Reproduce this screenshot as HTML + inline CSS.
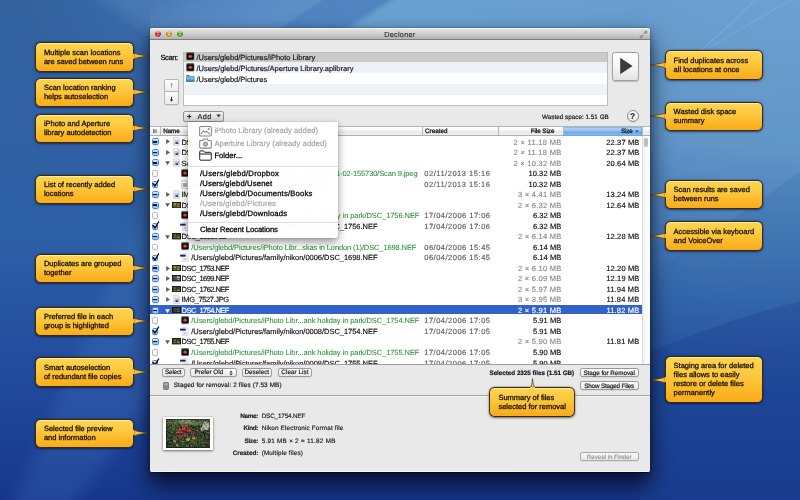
<!DOCTYPE html>
<html>
<head>
<meta charset="utf-8">
<title>Decloner</title>
<style>
html,body{margin:0;padding:0;background:#2a5298;}
body{width:800px;height:500px;overflow:hidden;}
#root{position:relative;width:800px;height:500px;overflow:hidden;font-family:"Liberation Sans",sans-serif;will-change:transform;}
.a{position:absolute;}
.t{position:absolute;white-space:pre;text-rendering:geometricPrecision;-webkit-text-stroke:0.16px currentColor;}
.co{position:absolute;box-sizing:border-box;border:0.7px solid rgba(38,30,8,.92);border-radius:5.6px;
  background:linear-gradient(#fdd554 0%,#fdc83e 42%,#fcb726 75%,#fbab1a 100%);
  box-shadow:0 0.8px 2.2px rgba(0,5,45,.6), inset 0 0.9px 0.5px rgba(255,240,165,.85);}
.btn{position:absolute;box-sizing:border-box;border:0.7px solid #9a9a9a;border-radius:2.2px;
  background:linear-gradient(#ffffff,#f3f3f3 50%,#e6e6e6);box-shadow:0 0.5px 0.5px rgba(0,0,0,.12);}
.cb{position:absolute;box-sizing:border-box;width:6.8px;height:6.8px;border:0.6px solid #b9b9b9;border-radius:1.6px;
  background:linear-gradient(#ffffff,#f1f1f1);box-shadow:0 0.4px 0.5px rgba(0,0,0,.15);}
.cbm{position:absolute;box-sizing:border-box;width:7px;height:7px;border:0.65px solid #4a86dc;border-radius:1.7px;
  background:linear-gradient(#d9e9fb 0%,#a9cdf5 45%,#6faaf0 55%,#a5d3fb 100%);box-shadow:0 0.4px 0.5px rgba(0,0,0,.2);}
</style>
</head>
<body>
<div id="root">
<svg class="a" style="left:0;top:0" width="800" height="500" viewBox="0 0 800 500">
<defs>
<linearGradient id="bg" x1="0" y1="0" x2="0" y2="1">
<stop offset="0" stop-color="#33629f"/><stop offset="0.48" stop-color="#2d5fa6"/><stop offset="0.8" stop-color="#1f479a"/><stop offset="1" stop-color="#17368b"/>
</linearGradient>
<radialGradient id="hl" cx="800" cy="-40" r="1" gradientUnits="userSpaceOnUse" gradientTransform="translate(800 -40) scale(780 420) translate(-800 40)">
<stop offset="0" stop-color="#6ea3d2" stop-opacity="1"/><stop offset="0.45" stop-color="#6a9fcf" stop-opacity=".85"/><stop offset="0.8" stop-color="#5a8fc5" stop-opacity=".3"/><stop offset="1" stop-color="#4a80bc" stop-opacity="0"/>
</radialGradient>
</defs>
<rect width="800" height="500" fill="url(#bg)"/>
<rect width="800" height="500" fill="url(#hl)"/>
<path d="M640 356 Q720 322 800 301 L800 500 L640 500 Z" fill="#1c4490" opacity=".38"/>
<path d="M640 280 Q720 230 800 172 L800 301 Q720 322 640 356 Z" fill="#2c62a6" opacity=".22"/>
<linearGradient id="ts" x1="150" y1="0" x2="660" y2="0" gradientUnits="userSpaceOnUse" gradientTransform="matrix(1 0 -1.54 1 2 0)">
<stop offset="0" stop-color="#4778b4" stop-opacity="1"/><stop offset="0.098" stop-color="#5384bf"/><stop offset="0.294" stop-color="#5d8fc7"/><stop offset="0.332" stop-color="#5c8ec6"/><stop offset="0.339" stop-color="#5083c0"/><stop offset="0.457" stop-color="#5284c1"/><stop offset="0.482" stop-color="#6aa0d0"/><stop offset="0.9" stop-color="#689dce" stop-opacity="1"/><stop offset="1" stop-color="#689dce" stop-opacity="0"/>
</linearGradient>
<linearGradient id="lb" x1="104" y1="12" x2="126" y2="-18" gradientUnits="userSpaceOnUse"><stop offset="0" stop-color="#4a7bb6" stop-opacity="0"/><stop offset="0.5" stop-color="#4a7bb7" stop-opacity=".8"/><stop offset="1" stop-color="#4a7bb7" stop-opacity=".95"/></linearGradient>
<path d="M92 0 L160 0 L160 46 Z" fill="url(#lb)"/>
<filter id="bb" x="-20%" y="-20%" width="140%" height="140%"><feGaussianBlur stdDeviation="7"/></filter>
<path d="M160 170 L160 390 L70 510 L10 510 Z" fill="#5f96dc" opacity=".17" filter="url(#bb)"/>
<path d="M150 0 H660 V30 H150 Z" fill="url(#ts)"/>
<path d="M700 52 Q728 26 756 -1" stroke="#9cc4e6" stroke-opacity=".32" stroke-width="1.1" fill="none"/>
<path d="M710 47 Q750 24 792 -1" stroke="#9cc4e6" stroke-opacity=".28" stroke-width="1.1" fill="none"/>
</svg>
<div class="a" style="left:150px;top:28px;width:500px;height:444px;border-radius:3px 3px 2.5px 2.5px;background:#e9e9e9;box-shadow:0 13px 22px 1px rgba(0,0,12,.66),0 3px 10px rgba(0,0,24,.28),0 0 1.5px rgba(0,0,10,.6),0 0.8px 0.6px rgba(0,0,20,.55),inset 0 -0.8px 0 #fbfbfb;"></div>
<div class="a" style="left:150px;top:28px;width:500px;height:12px;border-radius:3px 3px 0 0;background:linear-gradient(#e6e6e6,#d0d0d0 50%,#b4b4b4);border-bottom:0.7px solid #7e7e7e;box-sizing:border-box;box-shadow:inset 0 0.7px 0 rgba(255,255,255,.85)"></div>
<div class="a" style="left:154.6px;top:30.7px;width:6.6px;height:6.6px;border-radius:50%;box-sizing:border-box;border:0.5px solid #a81d14;background:radial-gradient(circle at 50% 85%,#ff7a70 0%,#d8291d 70%);box-shadow:0 0.5px 0 rgba(255,255,255,.5)"></div>
<div class="a" style="left:156.0px;top:31.3px;width:3.8px;height:2.2px;border-radius:50%;background:rgba(255,255,255,.55)"></div>
<div class="a" style="left:165.7px;top:30.7px;width:6.6px;height:6.6px;border-radius:50%;box-sizing:border-box;border:0.5px solid #a9700d;background:radial-gradient(circle at 50% 85%,#ffd56a 0%,#e59a14 70%);box-shadow:0 0.5px 0 rgba(255,255,255,.5)"></div>
<div class="a" style="left:167.1px;top:31.3px;width:3.8px;height:2.2px;border-radius:50%;background:rgba(255,255,255,.55)"></div>
<div class="a" style="left:176.7px;top:30.7px;width:6.6px;height:6.6px;border-radius:50%;box-sizing:border-box;border:0.5px solid #3a7c18;background:radial-gradient(circle at 50% 85%,#a6e37a 0%,#4faa22 70%);box-shadow:0 0.5px 0 rgba(255,255,255,.5)"></div>
<div class="a" style="left:178.1px;top:31.3px;width:3.8px;height:2.2px;border-radius:50%;background:rgba(255,255,255,.55)"></div>
<span class="t" style="left:384.18px;top:29.00px;font-size:7.3px;line-height:12px;height:12px;color:#333;letter-spacing:0.261px;">Decloner</span>
<svg class="a" style="left:639px;top:30px" width="9" height="9" viewBox="0 0 9 9"><g fill="#8e8e8e"><path d="M8.2 0.8 L8.2 4 L7.1 2.9 L5.4 4.6 L4.4 3.6 L6.1 1.9 L5 0.8 Z"/><path d="M0.8 8.2 L0.8 5 L1.9 6.1 L3.6 4.4 L4.6 5.4 L2.9 7.1 L4 8.2 Z"/></g></svg>
<span class="t" style="left:160.50px;top:52.00px;font-size:7.5px;line-height:12px;height:12px;color:#111;letter-spacing:-0.396px;-webkit-text-stroke:0.28px #111;">Scan:</span>
<div class="a" style="left:183px;top:51.5px;width:425.4px;height:54px;box-sizing:border-box;border:0.7px solid #bdbdbd;border-top-color:#a6a6a6;background:#fff;"></div>
<div class="a" style="left:183.7px;top:52.0px;width:423.2px;height:10.1px;background:linear-gradient(#b9b9b9,#c9c9c9 12%,#cbcbcb)"></div>
<div class="a" style="left:183.7px;top:62.1px;width:423.2px;height:11.2px;background:#eef1f7"></div>
<div class="a" style="left:183.7px;top:84.0px;width:423.2px;height:10.6px;background:#eef1f7"></div>
<svg class="a" style="left:186.30px;top:52.40px" width="8.6" height="9.1" viewBox="0 0 10 10.6"><rect x="0.4" y="0.4" width="9.2" height="9.4" rx="1.6" fill="#2e4a38"/><path d="M0.4 2.2 Q0.4 0.4 2.1 0.4 L9 0.4 L9 1.4 L0.4 4.6 Z" fill="#4f8f52"/><rect x="1.1" y="1.6" width="7.8" height="7.0" rx="1.0" fill="#0d0f0e"/><ellipse cx="5.0" cy="5.1" rx="2.5" ry="1.9" fill="#d81f36"/><ellipse cx="4.9" cy="4.9" rx="1.2" ry="0.8" fill="#ff6a7c"/><rect x="0.8" y="9.4" width="8.4" height="0.9" fill="#c9c9cf"/></svg>
<svg class="a" style="left:186.30px;top:63.10px" width="8.6" height="9.1" viewBox="0 0 10 10.6"><rect x="0.4" y="0.4" width="9.2" height="9.4" rx="1.6" fill="#2e4a38"/><path d="M0.4 2.2 Q0.4 0.4 2.1 0.4 L9 0.4 L9 1.4 L0.4 4.6 Z" fill="#4f8f52"/><rect x="1.1" y="1.6" width="7.8" height="7.0" rx="1.0" fill="#0d0f0e"/><ellipse cx="5.0" cy="5.1" rx="2.5" ry="1.9" fill="#d81f36"/><ellipse cx="4.9" cy="4.9" rx="1.2" ry="0.8" fill="#ff6a7c"/><rect x="0.8" y="9.4" width="8.4" height="0.9" fill="#c9c9cf"/></svg>
<svg class="a" style="left:186.30px;top:74.10px" width="8.6" height="8.6" viewBox="0 0 10 10"><path d="M0.3 1.3 L3.9 1.3 L4.7 2.3 L9.7 2.3 L9.7 9 L0.3 9 Z" fill="#3f7dbd"/><rect x="0.3" y="3.0" width="9.4" height="6.1" rx="0.4" fill="#5f9fd9"/><rect x="0.3" y="3.0" width="9.4" height="0.9" fill="#9cc9ef"/><path d="M1.6 4.6 h2.6 v1.6 h-2.6z M5.4 4.6 h2.8 v1.6 h-2.8z" fill="#8cbfe9" opacity=".9"/><rect x="0.3" y="7.4" width="9.4" height="1.7" fill="#3d7ab8"/></svg>
<span class="t" style="left:196.50px;top:52.00px;font-size:7.5px;line-height:12px;height:12px;color:#111;letter-spacing:-0.026px;">/Users/glebd/Pictures/iPhoto Library</span>
<span class="t" style="left:196.50px;top:63.00px;font-size:7.5px;line-height:12px;height:12px;color:#111;letter-spacing:-0.011px;">/Users/glebd/Pictures/Aperture Library.aplibrary</span>
<span class="t" style="left:196.50px;top:74.00px;font-size:7.5px;line-height:12px;height:12px;color:#111;letter-spacing:-0.032px;">/Users/glebd/Pictures</span>
<div class="a" style="left:612.3px;top:51.8px;width:26.5px;height:28.8px;box-sizing:border-box;border:0.8px solid #a2a2a2;border-radius:2.8px;background:linear-gradient(#ffffff,#f4f4f4 55%,#e3e3e3);box-shadow:0 0.6px 0.8px rgba(0,0,0,.2)"></div>
<svg class="a" style="left:613px;top:52px" width="27" height="29" viewBox="0 0 27 29"><path d="M7.2 5.8 L19.6 14 L7.2 22.2 Z" fill="#3b3b3b"/></svg>
<div class="btn" style="left:164.4px;top:78.6px;width:15.1px;height:13.2px;border-radius:1.8px 1.8px 0 0;border-color:#b4b4b4;background:linear-gradient(#fdfdfd,#ededed)"></div>
<div class="btn" style="left:164.4px;top:91.3px;width:15.1px;height:14.0px;border-radius:0 0 1.8px 1.8px;border-color:#b4b4b4;background:linear-gradient(#fbfbfb,#e9e9e9)"></div>
<svg class="a" style="left:164px;top:78px" width="16" height="28" viewBox="0 0 16 28"><g fill="none" stroke="#9a9a9a" stroke-width="0.85"><path d="M7.5 5.2 V9.4"/></g><path d="M6.1 6.8 L7.5 4.8 L8.9 6.8 Z" fill="#9a9a9a"/><g fill="none" stroke="#1e1e1e" stroke-width="0.95"><path d="M7.5 18.8 V22.6"/></g><path d="M6.0 21.4 L7.5 23.8 L9.0 21.4 Z" fill="#1e1e1e"/></svg>
<div class="btn" style="left:183.4px;top:110.8px;width:40.6px;height:10.9px;border-color:#8f8f8f;background:linear-gradient(#f2f2f2,#e2e2e2 50%,#d2d2d2);"></div>
<span class="t" style="left:187.00px;top:111.00px;font-size:7.6px;line-height:12px;height:12px;color:#222;font-weight:700;">+</span>
<span class="t" style="left:197.60px;top:111.00px;font-size:7.3px;line-height:12px;height:12px;color:#1a1a1a;letter-spacing:0.304px;">Add</span>
<svg class="a" style="left:216.2px;top:114.3px" width="5.2" height="3.6" viewBox="0 0 5.2 3.6"><path d="M0.3 0.4 L4.9 0.4 L2.6 3.3 Z" fill="#333"/></svg>
<span class="t" style="left:542.02px;top:112.00px;font-size:6.3px;line-height:12px;height:12px;color:#111;letter-spacing:0.024px;">Wasted space: 1.51 GB</span>
<div class="a" style="left:626.6px;top:110.2px;width:12.2px;height:12.2px;box-sizing:border-box;border-radius:50%;border:0.75px solid #8a8a8a;background:linear-gradient(#ffffff,#ededed);box-shadow:0 0.5px 0.6px rgba(0,0,0,.18)"></div>
<span class="t" style="left:630.03px;top:110.00px;font-size:8.4px;line-height:12px;height:12px;color:#222;font-weight:700;">?</span>
<div class="a" style="left:150px;top:136.2px;width:492px;height:227.4px;background:#fff"></div>
<div class="a" style="left:150px;top:126.0px;width:500px;height:10.2px;box-sizing:border-box;border-top:0.6px solid #b4b4b4;border-bottom:0.6px solid #b0b0b0;background:linear-gradient(#ffffff,#f4f4f4 45%,#e9e9e9 55%,#efefef)"></div>
<div class="a" style="left:563.2px;top:126.5px;width:78.6px;height:9.2px;background:linear-gradient(#bcd9f6,#8fbdee 48%,#6ea7e6 52%,#8dbff0);box-shadow:inset 0 0 0 0.5px rgba(60,110,180,.55)"></div>
<div class="a" style="left:160.3px;top:127.2px;width:0.6px;height:7.8px;background:#b9b9b9"></div>
<div class="a" style="left:422.3px;top:127.2px;width:0.6px;height:7.8px;background:#b9b9b9"></div>
<div class="a" style="left:498.3px;top:127.2px;width:0.6px;height:7.8px;background:#b9b9b9"></div>
<div class="a" style="left:563.0px;top:127.2px;width:0.6px;height:7.8px;background:#b9b9b9"></div>
<div class="a" style="left:641.8px;top:127.2px;width:0.6px;height:7.8px;background:#b9b9b9"></div>
<svg class="a" style="left:153.2px;top:128.9px" width="3.6" height="4.4" viewBox="0 0 3.6 4.4"><path d="M0.5 0.2 V4.2 M1.8 0.2 V4.2 M3.1 0.2 V4.2" stroke="#4a4a4a" stroke-width="0.7"/></svg>
<span class="t" style="left:163.20px;top:126.00px;font-size:6.3px;line-height:12px;height:12px;color:#1a1a1a;letter-spacing:-0.101px;-webkit-text-stroke:0.3px currentColor;">Name</span>
<span class="t" style="left:425.00px;top:126.00px;font-size:6.3px;line-height:12px;height:12px;color:#1a1a1a;letter-spacing:0.027px;-webkit-text-stroke:0.3px currentColor;">Created</span>
<span class="t" style="left:530.65px;top:126.00px;font-size:6.3px;line-height:12px;height:12px;color:#1a1a1a;letter-spacing:-0.051px;-webkit-text-stroke:0.3px currentColor;">File Size</span>
<span class="t" style="left:620.94px;top:126.00px;font-size:6.3px;line-height:12px;height:12px;color:#10243f;letter-spacing:-0.164px;-webkit-text-stroke:0.3px currentColor;">Size</span>
<svg class="a" style="left:635.3px;top:130.0px" width="3.8" height="3" viewBox="0 0 3.8 3"><path d="M0.2 0.3 L3.6 0.3 L1.9 2.8 Z" fill="#35507e"/></svg>
<div class="a" style="left:642.2px;top:136.2px;width:7.8px;height:227.4px;background:linear-gradient(90deg,#f0f0f0,#fafafa 40%,#fcfcfc);border-left:0.6px solid #dcdcdc;box-sizing:border-box"></div>
<div class="a" style="left:644.3px;top:138.0px;width:3.7px;height:9.3px;border-radius:1.9px;background:#bdbdbd"></div>
<div class="a" style="left:150px;top:136.2px;width:492px;height:227.4px;overflow:hidden"><div class="a" style="left:-150px;top:-136.2px;width:800px;height:500px">
<div class="a" style="left:150px;top:304.96px;width:492px;height:9.4px;background:#3262c9"></div>
<div class="cbm" style="left:151.5px;top:138.40px"></div>
<div class="a" style="left:153.3px;top:141.25px;width:3.4px;height:1.3px;background:#0b1330;border-radius:0.3px"></div>
<svg class="a" style="left:165.8px;top:139.40px" width="4.2" height="5" viewBox="0 0 4.2 5"><path d="M0.2 0.1 L4.1 2.5 L0.2 4.9 Z" fill="#5c5c5c"/></svg>
<svg class="a" style="left:172.60px;top:137.40px" width="7.6" height="9" viewBox="0 0 7.6 9"><path d="M0.6 0.4 L5 0.4 L7 2.4 L7 8.6 L0.6 8.6 Z" fill="#efeff2" stroke="#bdbdc2" stroke-width="0.5"/><path d="M5 0.4 L5 2.4 L7 2.4 Z" fill="#d4d4da"/><rect x="1.5" y="2.9" width="4.6" height="4.3" fill="#c3ccdc"/><path d="M1.5 6 L6.1 3.4 L6.1 4.6 L1.5 7.2 Z" fill="#a7b3cb"/><ellipse cx="3.9" cy="6.1" rx="1.5" ry="0.95" fill="#252d4a"/></svg>
<span class="t" style="left:181.60px;top:137.00px;font-size:7.5px;line-height:12px;height:12px;color:#111;letter-spacing:-0.548px;">DSC_1761.NEF</span>
<span class="t" style="left:513.60px;top:137.00px;font-size:7.5px;line-height:12px;height:12px;color:#8a8a8a;letter-spacing:0.303px;">2 × 11.18 MB</span>
<span class="t" style="left:606.32px;top:137.00px;font-size:7.5px;line-height:12px;height:12px;color:#111;letter-spacing:0.125px;">22.37 MB</span>
<div class="cbm" style="left:151.5px;top:148.92px"></div>
<div class="a" style="left:153.3px;top:151.77px;width:3.4px;height:1.3px;background:#0b1330;border-radius:0.3px"></div>
<svg class="a" style="left:165.8px;top:149.92px" width="4.2" height="5" viewBox="0 0 4.2 5"><path d="M0.2 0.1 L4.1 2.5 L0.2 4.9 Z" fill="#5c5c5c"/></svg>
<svg class="a" style="left:172.60px;top:147.92px" width="7.6" height="9" viewBox="0 0 7.6 9"><path d="M0.6 0.4 L5 0.4 L7 2.4 L7 8.6 L0.6 8.6 Z" fill="#efeff2" stroke="#bdbdc2" stroke-width="0.5"/><path d="M5 0.4 L5 2.4 L7 2.4 Z" fill="#d4d4da"/><rect x="1.5" y="2.9" width="4.6" height="4.3" fill="#c3ccdc"/><path d="M1.5 6 L6.1 3.4 L6.1 4.6 L1.5 7.2 Z" fill="#a7b3cb"/><ellipse cx="3.9" cy="6.1" rx="1.5" ry="0.95" fill="#252d4a"/></svg>
<span class="t" style="left:181.60px;top:147.00px;font-size:7.5px;line-height:12px;height:12px;color:#111;letter-spacing:-0.548px;">DSC_1760.NEF</span>
<span class="t" style="left:513.60px;top:147.00px;font-size:7.5px;line-height:12px;height:12px;color:#8a8a8a;letter-spacing:0.303px;">2 × 11.18 MB</span>
<span class="t" style="left:606.32px;top:147.00px;font-size:7.5px;line-height:12px;height:12px;color:#111;letter-spacing:0.125px;">22.37 MB</span>
<div class="cbm" style="left:151.5px;top:159.44px"></div>
<div class="a" style="left:153.3px;top:162.29px;width:3.4px;height:1.3px;background:#0b1330;border-radius:0.3px"></div>
<svg class="a" style="left:165.0px;top:161.24px" width="5" height="4.2" viewBox="0 0 5 4.2"><path d="M0.1 0.2 L4.9 0.2 L2.5 4.1 Z" fill="#5c5c5c"/></svg>
<svg class="a" style="left:172.60px;top:158.44px" width="7.6" height="9" viewBox="0 0 7.6 9"><path d="M0.6 0.4 L5 0.4 L7 2.4 L7 8.6 L0.6 8.6 Z" fill="#efeff2" stroke="#bdbdc2" stroke-width="0.5"/><path d="M5 0.4 L5 2.4 L7 2.4 Z" fill="#d4d4da"/><rect x="1.5" y="2.9" width="4.6" height="4.3" fill="#c3ccdc"/><path d="M1.5 6 L6.1 3.4 L6.1 4.6 L1.5 7.2 Z" fill="#a7b3cb"/><ellipse cx="3.9" cy="6.1" rx="1.5" ry="0.95" fill="#252d4a"/></svg>
<span class="t" style="left:181.60px;top:158.00px;font-size:7.5px;line-height:12px;height:12px;color:#111;letter-spacing:-0.101px;">Scan 9.jpeg</span>
<span class="t" style="left:513.56px;top:158.00px;font-size:7.5px;line-height:12px;height:12px;color:#8a8a8a;letter-spacing:0.257px;">2 × 10.32 MB</span>
<span class="t" style="left:606.32px;top:158.00px;font-size:7.5px;line-height:12px;height:12px;color:#111;letter-spacing:0.125px;">20.64 MB</span>
<div class="cb" style="left:151.6px;top:170.06px"></div>
<svg class="a" style="left:181.30px;top:168.76px" width="8.2" height="8.7" viewBox="0 0 10 10.6"><rect x="0.4" y="0.4" width="9.2" height="9.4" rx="1.6" fill="#2e4a38"/><path d="M0.4 2.2 Q0.4 0.4 2.1 0.4 L9 0.4 L9 1.4 L0.4 4.6 Z" fill="#4f8f52"/><rect x="1.1" y="1.6" width="7.8" height="7.0" rx="1.0" fill="#0d0f0e"/><ellipse cx="5.0" cy="5.1" rx="2.5" ry="1.9" fill="#d81f36"/><ellipse cx="4.9" cy="4.9" rx="1.2" ry="0.8" fill="#ff6a7c"/><rect x="0.8" y="9.4" width="8.4" height="0.9" fill="#c9c9cf"/></svg>
<span class="t" style="left:191.30px;top:168.00px;font-size:7.5px;line-height:12px;height:12px;color:#258f34;letter-spacing:-0.122px;-webkit-text-stroke:0.05px currentColor;">/Users/glebd/Pictures/iPhoto Libr...ers/2013-11-02-155730/Scan 9.jpeg</span>
<span class="t" style="left:424.30px;top:168.00px;font-size:7.5px;line-height:12px;height:12px;color:#5f5f5f;letter-spacing:0.523px;">02/11/2013 15:16</span>
<span class="t" style="left:528.40px;top:168.00px;font-size:7.5px;line-height:12px;height:12px;color:#111;letter-spacing:0.100px;">10.32 MB</span>
<div class="cbm" style="left:151.5px;top:180.98px;width:6.8px;height:6.8px"></div>
<svg class="a" style="left:151.9px;top:179.08px" width="8" height="8.4" viewBox="0 0 8 8.4"><path d="M1.2 4.6 L3.0 7.0 L6.6 1.0" fill="none" stroke="#05081c" stroke-width="1.35" stroke-linecap="round" stroke-linejoin="round"/></svg>
<svg class="a" style="left:181.20px;top:179.58px" width="8" height="9" viewBox="0 0 8 9"><path d="M0.8 0.5 L5.4 0.5 L7.3 2.4 L7.3 8.6 L0.8 8.6 Z" fill="#f4f6f8" stroke="#a8a8a8" stroke-width="0.5"/><rect x="1.8" y="3.2" width="4.4" height="3.6" fill="#9aa7b8"/></svg>
<span class="t" style="left:191.30px;top:179.00px;font-size:7.5px;line-height:12px;height:12px;color:#111;">/Users/glebd/Pictures/Scans/Scan 9.jpeg</span>
<span class="t" style="left:424.30px;top:179.00px;font-size:7.5px;line-height:12px;height:12px;color:#5f5f5f;letter-spacing:0.523px;">02/11/2013 15:16</span>
<span class="t" style="left:528.40px;top:179.00px;font-size:7.5px;line-height:12px;height:12px;color:#111;letter-spacing:0.100px;">10.32 MB</span>
<div class="cbm" style="left:151.5px;top:191.00px"></div>
<div class="a" style="left:153.3px;top:193.85px;width:3.4px;height:1.3px;background:#0b1330;border-radius:0.3px"></div>
<svg class="a" style="left:165.8px;top:192.00px" width="4.2" height="5" viewBox="0 0 4.2 5"><path d="M0.2 0.1 L4.1 2.5 L0.2 4.9 Z" fill="#5c5c5c"/></svg>
<svg class="a" style="left:172.60px;top:190.00px" width="7.6" height="9" viewBox="0 0 7.6 9"><path d="M0.6 0.4 L5 0.4 L7 2.4 L7 8.6 L0.6 8.6 Z" fill="#efeff2" stroke="#bdbdc2" stroke-width="0.5"/><path d="M5 0.4 L5 2.4 L7 2.4 Z" fill="#d4d4da"/><rect x="1.5" y="2.9" width="4.6" height="4.3" fill="#c3ccdc"/><path d="M1.5 6 L6.1 3.4 L6.1 4.6 L1.5 7.2 Z" fill="#a7b3cb"/><ellipse cx="3.9" cy="6.1" rx="1.5" ry="0.95" fill="#252d4a"/></svg>
<span class="t" style="left:181.60px;top:189.00px;font-size:7.5px;line-height:12px;height:12px;color:#111;letter-spacing:-0.374px;">IMG_7526.JPG</span>
<span class="t" style="left:518.05px;top:189.00px;font-size:7.5px;line-height:12px;height:12px;color:#8a8a8a;letter-spacing:0.250px;">3 × 4.41 MB</span>
<span class="t" style="left:606.32px;top:189.00px;font-size:7.5px;line-height:12px;height:12px;color:#111;letter-spacing:0.125px;">13.24 MB</span>
<div class="cbm" style="left:151.5px;top:201.52px"></div>
<div class="a" style="left:153.3px;top:204.37px;width:3.4px;height:1.3px;background:#0b1330;border-radius:0.3px"></div>
<svg class="a" style="left:165.0px;top:203.32px" width="5" height="4.2" viewBox="0 0 5 4.2"><path d="M0.1 0.2 L4.9 0.2 L2.5 4.1 Z" fill="#5c5c5c"/></svg>
<svg class="a" style="left:171.70px;top:201.72px" width="9.2" height="6.4" viewBox="0 0 9.2 6.4"><rect x="0" y="0" width="9.2" height="6.4" fill="#15150d"/><rect x="0.8" y="0.7" width="7.6" height="5" fill="#4a4522"/><rect x="1.4" y="1.2" width="2.6" height="1.8" fill="#a39a4e"/><rect x="4.7" y="1.3" width="2.9" height="1.9" fill="#857d3c"/><rect x="1.6" y="3.5" width="2.4" height="1.6" fill="#6d6a30"/><rect x="4.9" y="3.6" width="2.6" height="1.5" fill="#928a44"/></svg>
<span class="t" style="left:181.60px;top:200.00px;font-size:7.5px;line-height:12px;height:12px;color:#111;letter-spacing:-0.548px;">DSC_1756.NEF</span>
<span class="t" style="left:518.05px;top:200.00px;font-size:7.5px;line-height:12px;height:12px;color:#8a8a8a;letter-spacing:0.250px;">2 × 6.32 MB</span>
<span class="t" style="left:606.32px;top:200.00px;font-size:7.5px;line-height:12px;height:12px;color:#111;letter-spacing:0.125px;">12.64 MB</span>
<div class="cb" style="left:151.6px;top:212.14px"></div>
<svg class="a" style="left:181.30px;top:210.84px" width="8.2" height="8.7" viewBox="0 0 10 10.6"><rect x="0.4" y="0.4" width="9.2" height="9.4" rx="1.6" fill="#2e4a38"/><path d="M0.4 2.2 Q0.4 0.4 2.1 0.4 L9 0.4 L9 1.4 L0.4 4.6 Z" fill="#4f8f52"/><rect x="1.1" y="1.6" width="7.8" height="7.0" rx="1.0" fill="#0d0f0e"/><ellipse cx="5.0" cy="5.1" rx="2.5" ry="1.9" fill="#d81f36"/><ellipse cx="4.9" cy="4.9" rx="1.2" ry="0.8" fill="#ff6a7c"/><rect x="0.8" y="9.4" width="8.4" height="0.9" fill="#c9c9cf"/></svg>
<span class="t" style="left:191.30px;top:210.00px;font-size:7.5px;line-height:12px;height:12px;color:#258f34;letter-spacing:-0.080px;-webkit-text-stroke:0.05px currentColor;">/Users/glebd/Pictures/iPhoto Libr...ank holiday in park/DSC_1756.NEF</span>
<span class="t" style="left:424.30px;top:210.00px;font-size:7.5px;line-height:12px;height:12px;color:#5f5f5f;letter-spacing:0.488px;">17/04/2006 17:06</span>
<span class="t" style="left:532.95px;top:210.00px;font-size:7.5px;line-height:12px;height:12px;color:#111;letter-spacing:0.053px;">6.32 MB</span>
<div class="cbm" style="left:151.5px;top:223.06px;width:6.8px;height:6.8px"></div>
<svg class="a" style="left:151.9px;top:221.16px" width="8" height="8.4" viewBox="0 0 8 8.4"><path d="M1.2 4.6 L3.0 7.0 L6.6 1.0" fill="none" stroke="#05081c" stroke-width="1.35" stroke-linecap="round" stroke-linejoin="round"/></svg>
<svg class="a" style="left:180.40px;top:221.66px" width="9" height="9" viewBox="0 0 9 9"><path d="M2.6 0.5 L6.4 0.5 L8.2 2.4 L8.2 8.6 L2.6 8.6 Z" fill="#f3f3f5" stroke="#c2c2c6" stroke-width="0.5"/><rect x="0.1" y="1.7" width="5.6" height="1.9" fill="#16207a"/><path d="M4.2 5.2 L6.4 7.4 M6.4 5.2 L4.2 7.4" stroke="#9a9aa0" stroke-width="0.6"/></svg>
<span class="t" style="left:191.30px;top:221.00px;font-size:7.5px;line-height:12px;height:12px;color:#111;letter-spacing:-0.027px;">/Users/glebd/Pictures/family/nikon/0008/DSC_1756.NEF</span>
<span class="t" style="left:424.30px;top:221.00px;font-size:7.5px;line-height:12px;height:12px;color:#5f5f5f;letter-spacing:0.488px;">17/04/2006 17:06</span>
<span class="t" style="left:532.95px;top:221.00px;font-size:7.5px;line-height:12px;height:12px;color:#111;letter-spacing:0.053px;">6.32 MB</span>
<div class="cbm" style="left:151.5px;top:233.08px"></div>
<div class="a" style="left:153.3px;top:235.93px;width:3.4px;height:1.3px;background:#0b1330;border-radius:0.3px"></div>
<svg class="a" style="left:165.0px;top:234.88px" width="5" height="4.2" viewBox="0 0 5 4.2"><path d="M0.1 0.2 L4.9 0.2 L2.5 4.1 Z" fill="#5c5c5c"/></svg>
<svg class="a" style="left:171.70px;top:233.28px" width="9.2" height="6.4" viewBox="0 0 9.2 6.4"><rect x="0" y="0" width="9.2" height="6.4" fill="#15150d"/><rect x="0.8" y="0.7" width="7.6" height="5" fill="#2a3a22"/><rect x="1.4" y="1.2" width="2.6" height="1.8" fill="#4f6a3a"/><rect x="4.7" y="1.3" width="2.9" height="1.9" fill="#3a4e2c"/><rect x="1.6" y="3.5" width="2.4" height="1.6" fill="#5d6e44"/><rect x="4.9" y="3.6" width="2.6" height="1.5" fill="#8a8f6a"/></svg>
<span class="t" style="left:181.60px;top:231.00px;font-size:7.5px;line-height:12px;height:12px;color:#111;letter-spacing:-0.548px;">DSC_1698.NEF</span>
<span class="t" style="left:518.05px;top:231.00px;font-size:7.5px;line-height:12px;height:12px;color:#8a8a8a;letter-spacing:0.250px;">2 × 6.14 MB</span>
<span class="t" style="left:606.32px;top:231.00px;font-size:7.5px;line-height:12px;height:12px;color:#111;letter-spacing:0.125px;">12.28 MB</span>
<div class="cb" style="left:151.6px;top:243.70px"></div>
<svg class="a" style="left:181.30px;top:242.40px" width="8.2" height="8.7" viewBox="0 0 10 10.6"><rect x="0.4" y="0.4" width="9.2" height="9.4" rx="1.6" fill="#2e4a38"/><path d="M0.4 2.2 Q0.4 0.4 2.1 0.4 L9 0.4 L9 1.4 L0.4 4.6 Z" fill="#4f8f52"/><rect x="1.1" y="1.6" width="7.8" height="7.0" rx="1.0" fill="#0d0f0e"/><ellipse cx="5.0" cy="5.1" rx="2.5" ry="1.9" fill="#d81f36"/><ellipse cx="4.9" cy="4.9" rx="1.2" ry="0.8" fill="#ff6a7c"/><rect x="0.8" y="9.4" width="8.4" height="0.9" fill="#c9c9cf"/></svg>
<span class="t" style="left:191.30px;top:242.00px;font-size:7.5px;line-height:12px;height:12px;color:#258f34;letter-spacing:-0.114px;-webkit-text-stroke:0.05px currentColor;">/Users/glebd/Pictures/iPhoto Libr...skas in London (1)/DSC_1698.NEF</span>
<span class="t" style="left:424.30px;top:242.00px;font-size:7.5px;line-height:12px;height:12px;color:#5f5f5f;letter-spacing:0.488px;">06/04/2006 15:45</span>
<span class="t" style="left:532.95px;top:242.00px;font-size:7.5px;line-height:12px;height:12px;color:#111;letter-spacing:0.053px;">6.14 MB</span>
<div class="cbm" style="left:151.5px;top:254.62px;width:6.8px;height:6.8px"></div>
<svg class="a" style="left:151.9px;top:252.72px" width="8" height="8.4" viewBox="0 0 8 8.4"><path d="M1.2 4.6 L3.0 7.0 L6.6 1.0" fill="none" stroke="#05081c" stroke-width="1.35" stroke-linecap="round" stroke-linejoin="round"/></svg>
<svg class="a" style="left:180.40px;top:253.22px" width="9" height="9" viewBox="0 0 9 9"><path d="M2.6 0.5 L6.4 0.5 L8.2 2.4 L8.2 8.6 L2.6 8.6 Z" fill="#f3f3f5" stroke="#c2c2c6" stroke-width="0.5"/><rect x="0.1" y="1.7" width="5.6" height="1.9" fill="#16207a"/><path d="M4.2 5.2 L6.4 7.4 M6.4 5.2 L4.2 7.4" stroke="#9a9aa0" stroke-width="0.6"/></svg>
<span class="t" style="left:191.30px;top:252.00px;font-size:7.5px;line-height:12px;height:12px;color:#111;letter-spacing:-0.027px;">/Users/glebd/Pictures/family/nikon/0006/DSC_1698.NEF</span>
<span class="t" style="left:424.30px;top:252.00px;font-size:7.5px;line-height:12px;height:12px;color:#5f5f5f;letter-spacing:0.488px;">06/04/2006 15:45</span>
<span class="t" style="left:532.95px;top:252.00px;font-size:7.5px;line-height:12px;height:12px;color:#111;letter-spacing:0.053px;">6.14 MB</span>
<div class="cbm" style="left:151.5px;top:264.64px"></div>
<div class="a" style="left:153.3px;top:267.49px;width:3.4px;height:1.3px;background:#0b1330;border-radius:0.3px"></div>
<svg class="a" style="left:165.8px;top:265.64px" width="4.2" height="5" viewBox="0 0 4.2 5"><path d="M0.2 0.1 L4.1 2.5 L0.2 4.9 Z" fill="#5c5c5c"/></svg>
<svg class="a" style="left:171.70px;top:264.84px" width="9.2" height="6.4" viewBox="0 0 9.2 6.4"><rect x="0" y="0" width="9.2" height="6.4" fill="#15150d"/><rect x="0.8" y="0.7" width="7.6" height="5" fill="#4a4522"/><rect x="1.4" y="1.2" width="2.6" height="1.8" fill="#a39a4e"/><rect x="4.7" y="1.3" width="2.9" height="1.9" fill="#857d3c"/><rect x="1.6" y="3.5" width="2.4" height="1.6" fill="#6d6a30"/><rect x="4.9" y="3.6" width="2.6" height="1.5" fill="#928a44"/></svg>
<span class="t" style="left:181.60px;top:263.00px;font-size:7.5px;line-height:12px;height:12px;color:#111;letter-spacing:-0.548px;">DSC_1753.NEF</span>
<span class="t" style="left:518.05px;top:263.00px;font-size:7.5px;line-height:12px;height:12px;color:#8a8a8a;letter-spacing:0.250px;">2 × 6.10 MB</span>
<span class="t" style="left:606.32px;top:263.00px;font-size:7.5px;line-height:12px;height:12px;color:#111;letter-spacing:0.125px;">12.20 MB</span>
<div class="cbm" style="left:151.5px;top:275.16px"></div>
<div class="a" style="left:153.3px;top:278.01px;width:3.4px;height:1.3px;background:#0b1330;border-radius:0.3px"></div>
<svg class="a" style="left:165.8px;top:276.16px" width="4.2" height="5" viewBox="0 0 4.2 5"><path d="M0.2 0.1 L4.1 2.5 L0.2 4.9 Z" fill="#5c5c5c"/></svg>
<svg class="a" style="left:171.70px;top:275.36px" width="9.2" height="6.4" viewBox="0 0 9.2 6.4"><rect x="0" y="0" width="9.2" height="6.4" fill="#15150d"/><rect x="0.8" y="0.7" width="7.6" height="5" fill="#3a403a"/><rect x="1.4" y="1.2" width="2.6" height="1.8" fill="#565c52"/><rect x="4.7" y="1.3" width="2.9" height="1.9" fill="#b9bdb4"/><rect x="1.6" y="3.5" width="2.4" height="1.6" fill="#4a5046"/><rect x="4.9" y="3.6" width="2.6" height="1.5" fill="#8e938a"/></svg>
<span class="t" style="left:181.60px;top:273.00px;font-size:7.5px;line-height:12px;height:12px;color:#111;letter-spacing:-0.548px;">DSC_1699.NEF</span>
<span class="t" style="left:518.05px;top:273.00px;font-size:7.5px;line-height:12px;height:12px;color:#8a8a8a;letter-spacing:0.250px;">2 × 6.09 MB</span>
<span class="t" style="left:606.32px;top:273.00px;font-size:7.5px;line-height:12px;height:12px;color:#111;letter-spacing:0.125px;">12.19 MB</span>
<div class="cbm" style="left:151.5px;top:285.68px"></div>
<div class="a" style="left:153.3px;top:288.53px;width:3.4px;height:1.3px;background:#0b1330;border-radius:0.3px"></div>
<svg class="a" style="left:165.8px;top:286.68px" width="4.2" height="5" viewBox="0 0 4.2 5"><path d="M0.2 0.1 L4.1 2.5 L0.2 4.9 Z" fill="#5c5c5c"/></svg>
<svg class="a" style="left:171.70px;top:285.88px" width="9.2" height="6.4" viewBox="0 0 9.2 6.4"><rect x="0" y="0" width="9.2" height="6.4" fill="#15150d"/><rect x="0.8" y="0.7" width="7.6" height="5" fill="#2a3a22"/><rect x="1.4" y="1.2" width="2.6" height="1.8" fill="#4f6a3a"/><rect x="4.7" y="1.3" width="2.9" height="1.9" fill="#3a4e2c"/><rect x="1.6" y="3.5" width="2.4" height="1.6" fill="#5d6e44"/><rect x="4.9" y="3.6" width="2.6" height="1.5" fill="#8a8f6a"/></svg>
<span class="t" style="left:181.60px;top:284.00px;font-size:7.5px;line-height:12px;height:12px;color:#111;letter-spacing:-0.548px;">DSC_1762.NEF</span>
<span class="t" style="left:518.05px;top:284.00px;font-size:7.5px;line-height:12px;height:12px;color:#8a8a8a;letter-spacing:0.250px;">2 × 5.97 MB</span>
<span class="t" style="left:606.39px;top:284.00px;font-size:7.5px;line-height:12px;height:12px;color:#111;letter-spacing:0.194px;">11.94 MB</span>
<div class="cbm" style="left:151.5px;top:296.20px"></div>
<div class="a" style="left:153.3px;top:299.05px;width:3.4px;height:1.3px;background:#0b1330;border-radius:0.3px"></div>
<svg class="a" style="left:165.8px;top:297.20px" width="4.2" height="5" viewBox="0 0 4.2 5"><path d="M0.2 0.1 L4.1 2.5 L0.2 4.9 Z" fill="#5c5c5c"/></svg>
<svg class="a" style="left:172.60px;top:295.20px" width="7.6" height="9" viewBox="0 0 7.6 9"><path d="M0.6 0.4 L5 0.4 L7 2.4 L7 8.6 L0.6 8.6 Z" fill="#efeff2" stroke="#bdbdc2" stroke-width="0.5"/><path d="M5 0.4 L5 2.4 L7 2.4 Z" fill="#d4d4da"/><rect x="1.5" y="2.9" width="4.6" height="4.3" fill="#c3ccdc"/><path d="M1.5 6 L6.1 3.4 L6.1 4.6 L1.5 7.2 Z" fill="#a7b3cb"/><ellipse cx="3.9" cy="6.1" rx="1.5" ry="0.95" fill="#252d4a"/></svg>
<span class="t" style="left:181.60px;top:294.00px;font-size:7.5px;line-height:12px;height:12px;color:#111;letter-spacing:-0.374px;">IMG_7527.JPG</span>
<span class="t" style="left:518.05px;top:294.00px;font-size:7.5px;line-height:12px;height:12px;color:#8a8a8a;letter-spacing:0.250px;">3 × 3.95 MB</span>
<span class="t" style="left:606.39px;top:294.00px;font-size:7.5px;line-height:12px;height:12px;color:#111;letter-spacing:0.194px;">11.84 MB</span>
<div class="cbm" style="left:151.5px;top:306.72px"></div>
<div class="a" style="left:153.3px;top:309.57px;width:3.4px;height:1.3px;background:#0b1330;border-radius:0.3px"></div>
<svg class="a" style="left:165.0px;top:308.52px" width="5" height="4.2" viewBox="0 0 5 4.2"><path d="M0.1 0.2 L4.9 0.2 L2.5 4.1 Z" fill="#fff"/></svg>
<svg class="a" style="left:171.70px;top:306.92px" width="9.2" height="6.4" viewBox="0 0 9.2 6.4"><rect x="0" y="0" width="9.2" height="6.4" fill="#15150d"/><rect x="0.8" y="0.7" width="7.6" height="5" fill="#2c2a18"/><rect x="1.4" y="1.2" width="2.6" height="1.8" fill="#6e3326"/><rect x="4.7" y="1.3" width="2.9" height="1.9" fill="#5a5a2e"/><rect x="1.6" y="3.5" width="2.4" height="1.6" fill="#7a2a2a"/><rect x="4.9" y="3.6" width="2.6" height="1.5" fill="#6a6a34"/></svg>
<span class="t" style="left:181.60px;top:305.00px;font-size:7.5px;line-height:12px;height:12px;color:#fff;letter-spacing:-0.548px;">DSC_1754.NEF</span>
<span class="t" style="left:518.05px;top:305.00px;font-size:7.5px;line-height:12px;height:12px;color:#fff;letter-spacing:0.250px;">2 × 5.91 MB</span>
<span class="t" style="left:606.39px;top:305.00px;font-size:7.5px;line-height:12px;height:12px;color:#fff;letter-spacing:0.194px;">11.82 MB</span>
<div class="cb" style="left:151.6px;top:317.34px"></div>
<svg class="a" style="left:181.30px;top:316.04px" width="8.2" height="8.7" viewBox="0 0 10 10.6"><rect x="0.4" y="0.4" width="9.2" height="9.4" rx="1.6" fill="#2e4a38"/><path d="M0.4 2.2 Q0.4 0.4 2.1 0.4 L9 0.4 L9 1.4 L0.4 4.6 Z" fill="#4f8f52"/><rect x="1.1" y="1.6" width="7.8" height="7.0" rx="1.0" fill="#0d0f0e"/><ellipse cx="5.0" cy="5.1" rx="2.5" ry="1.9" fill="#d81f36"/><ellipse cx="4.9" cy="4.9" rx="1.2" ry="0.8" fill="#ff6a7c"/><rect x="0.8" y="9.4" width="8.4" height="0.9" fill="#c9c9cf"/></svg>
<span class="t" style="left:191.30px;top:315.00px;font-size:7.5px;line-height:12px;height:12px;color:#258f34;letter-spacing:-0.080px;-webkit-text-stroke:0.05px currentColor;">/Users/glebd/Pictures/iPhoto Libr...ank holiday in park/DSC_1754.NEF</span>
<span class="t" style="left:424.30px;top:315.00px;font-size:7.5px;line-height:12px;height:12px;color:#5f5f5f;letter-spacing:0.488px;">17/04/2006 17:05</span>
<span class="t" style="left:532.95px;top:315.00px;font-size:7.5px;line-height:12px;height:12px;color:#111;letter-spacing:0.053px;">5.91 MB</span>
<div class="cbm" style="left:151.5px;top:328.26px;width:6.8px;height:6.8px"></div>
<svg class="a" style="left:151.9px;top:326.36px" width="8" height="8.4" viewBox="0 0 8 8.4"><path d="M1.2 4.6 L3.0 7.0 L6.6 1.0" fill="none" stroke="#05081c" stroke-width="1.35" stroke-linecap="round" stroke-linejoin="round"/></svg>
<svg class="a" style="left:180.40px;top:326.86px" width="9" height="9" viewBox="0 0 9 9"><path d="M2.6 0.5 L6.4 0.5 L8.2 2.4 L8.2 8.6 L2.6 8.6 Z" fill="#f3f3f5" stroke="#c2c2c6" stroke-width="0.5"/><rect x="0.1" y="1.7" width="5.6" height="1.9" fill="#16207a"/><path d="M4.2 5.2 L6.4 7.4 M6.4 5.2 L4.2 7.4" stroke="#9a9aa0" stroke-width="0.6"/></svg>
<span class="t" style="left:191.30px;top:326.00px;font-size:7.5px;line-height:12px;height:12px;color:#111;letter-spacing:-0.027px;">/Users/glebd/Pictures/family/nikon/0008/DSC_1754.NEF</span>
<span class="t" style="left:424.30px;top:326.00px;font-size:7.5px;line-height:12px;height:12px;color:#5f5f5f;letter-spacing:0.488px;">17/04/2006 17:05</span>
<span class="t" style="left:532.95px;top:326.00px;font-size:7.5px;line-height:12px;height:12px;color:#111;letter-spacing:0.053px;">5.91 MB</span>
<div class="cbm" style="left:151.5px;top:338.28px"></div>
<div class="a" style="left:153.3px;top:341.13px;width:3.4px;height:1.3px;background:#0b1330;border-radius:0.3px"></div>
<svg class="a" style="left:165.0px;top:340.08px" width="5" height="4.2" viewBox="0 0 5 4.2"><path d="M0.1 0.2 L4.9 0.2 L2.5 4.1 Z" fill="#5c5c5c"/></svg>
<svg class="a" style="left:171.70px;top:338.48px" width="9.2" height="6.4" viewBox="0 0 9.2 6.4"><rect x="0" y="0" width="9.2" height="6.4" fill="#15150d"/><rect x="0.8" y="0.7" width="7.6" height="5" fill="#2a3a22"/><rect x="1.4" y="1.2" width="2.6" height="1.8" fill="#4f6a3a"/><rect x="4.7" y="1.3" width="2.9" height="1.9" fill="#3a4e2c"/><rect x="1.6" y="3.5" width="2.4" height="1.6" fill="#5d6e44"/><rect x="4.9" y="3.6" width="2.6" height="1.5" fill="#8a8f6a"/></svg>
<span class="t" style="left:181.60px;top:336.00px;font-size:7.5px;line-height:12px;height:12px;color:#111;letter-spacing:-0.548px;">DSC_1755.NEF</span>
<span class="t" style="left:518.05px;top:336.00px;font-size:7.5px;line-height:12px;height:12px;color:#8a8a8a;letter-spacing:0.250px;">2 × 5.90 MB</span>
<span class="t" style="left:606.39px;top:336.00px;font-size:7.5px;line-height:12px;height:12px;color:#111;letter-spacing:0.194px;">11.81 MB</span>
<div class="cb" style="left:151.6px;top:348.90px"></div>
<svg class="a" style="left:181.30px;top:347.60px" width="8.2" height="8.7" viewBox="0 0 10 10.6"><rect x="0.4" y="0.4" width="9.2" height="9.4" rx="1.6" fill="#2e4a38"/><path d="M0.4 2.2 Q0.4 0.4 2.1 0.4 L9 0.4 L9 1.4 L0.4 4.6 Z" fill="#4f8f52"/><rect x="1.1" y="1.6" width="7.8" height="7.0" rx="1.0" fill="#0d0f0e"/><ellipse cx="5.0" cy="5.1" rx="2.5" ry="1.9" fill="#d81f36"/><ellipse cx="4.9" cy="4.9" rx="1.2" ry="0.8" fill="#ff6a7c"/><rect x="0.8" y="9.4" width="8.4" height="0.9" fill="#c9c9cf"/></svg>
<span class="t" style="left:191.30px;top:347.00px;font-size:7.5px;line-height:12px;height:12px;color:#258f34;letter-spacing:-0.080px;-webkit-text-stroke:0.05px currentColor;">/Users/glebd/Pictures/iPhoto Libr...ank holiday in park/DSC_1755.NEF</span>
<span class="t" style="left:424.30px;top:347.00px;font-size:7.5px;line-height:12px;height:12px;color:#5f5f5f;letter-spacing:0.488px;">17/04/2006 17:05</span>
<span class="t" style="left:532.95px;top:347.00px;font-size:7.5px;line-height:12px;height:12px;color:#111;letter-spacing:0.053px;">5.90 MB</span>
<div class="cbm" style="left:151.5px;top:359.82px;width:6.8px;height:6.8px"></div>
<svg class="a" style="left:151.9px;top:357.92px" width="8" height="8.4" viewBox="0 0 8 8.4"><path d="M1.2 4.6 L3.0 7.0 L6.6 1.0" fill="none" stroke="#05081c" stroke-width="1.35" stroke-linecap="round" stroke-linejoin="round"/></svg>
<svg class="a" style="left:180.40px;top:358.42px" width="9" height="9" viewBox="0 0 9 9"><path d="M2.6 0.5 L6.4 0.5 L8.2 2.4 L8.2 8.6 L2.6 8.6 Z" fill="#f3f3f5" stroke="#c2c2c6" stroke-width="0.5"/><rect x="0.1" y="1.7" width="5.6" height="1.9" fill="#16207a"/><path d="M4.2 5.2 L6.4 7.4 M6.4 5.2 L4.2 7.4" stroke="#9a9aa0" stroke-width="0.6"/></svg>
<span class="t" style="left:191.30px;top:358.00px;font-size:7.5px;line-height:12px;height:12px;color:#111;letter-spacing:-0.027px;">/Users/glebd/Pictures/family/nikon/0008/DSC_1755.NEF</span>
<span class="t" style="left:424.30px;top:358.00px;font-size:7.5px;line-height:12px;height:12px;color:#5f5f5f;letter-spacing:0.488px;">17/04/2006 17:05</span>
<span class="t" style="left:532.95px;top:358.00px;font-size:7.5px;line-height:12px;height:12px;color:#111;letter-spacing:0.053px;">5.90 MB</span>
</div></div>
<div class="a" style="left:150px;top:363.6px;width:500px;height:0.7px;background:#9f9f9f"></div>
<div class="btn" style="left:161.8px;top:367.7px;width:23.1px;height:9.3px;"></div>
<span class="t" style="left:165.06px;top:367.00px;font-size:6.3px;line-height:12px;height:12px;color:#111;letter-spacing:-0.185px;">Select</span>
<div class="btn" style="left:190.2px;top:367.7px;width:46.6px;height:9.3px"></div>
<span class="t" style="left:194.40px;top:367.00px;font-size:6.3px;line-height:12px;height:12px;color:#111;letter-spacing:0.009px;">Prefer Old</span>
<svg class="a" style="left:229.2px;top:369.6px" width="4" height="6" viewBox="0 0 4 6"><path d="M0.4 2.4 L2 0.5 L3.6 2.4 Z M0.4 3.6 L2 5.5 L3.6 3.6 Z" fill="#333"/></svg>
<div class="btn" style="left:241.5px;top:367.7px;width:30.6px;height:9.3px;"></div>
<span class="t" style="left:244.55px;top:367.00px;font-size:6.3px;line-height:12px;height:12px;color:#111;letter-spacing:-0.001px;">Deselect</span>
<div class="btn" style="left:277.8px;top:367.7px;width:34.2px;height:9.3px;"></div>
<span class="t" style="left:281.33px;top:367.00px;font-size:6.3px;line-height:12px;height:12px;color:#111;letter-spacing:0.059px;">Clear List</span>
<svg class="a" style="left:162.6px;top:381.8px" width="6" height="8" viewBox="0 0 6 8"><rect x="0.5" y="0.5" width="5" height="7" rx="0.8" fill="#8c8c8c" stroke="#555" stroke-width="0.6"/><rect x="1.5" y="1.6" width="3" height="1" fill="#cfcfcf"/></svg>
<span class="t" style="left:173.70px;top:380.00px;font-size:6.3px;line-height:12px;height:12px;color:#111;letter-spacing:0.146px;">Staged for removal: 2 files (7.53 MB)</span>
<span class="t" style="left:489.47px;top:368.00px;font-size:6.3px;line-height:12px;height:12px;color:#111;letter-spacing:-0.026px;font-weight:700;">Selected 2325 files (1.51 GB)</span>
<div class="btn" style="left:579.6px;top:367.9px;width:59.2px;height:8.9px;"></div>
<span class="t" style="left:583.48px;top:368.00px;font-size:6.3px;line-height:12px;height:12px;color:#111;letter-spacing:-0.046px;">Stage for Removal</span>
<div class="btn" style="left:579.6px;top:381.0px;width:59.2px;height:8.8px;"></div>
<span class="t" style="left:584.22px;top:381.00px;font-size:6.3px;line-height:12px;height:12px;color:#111;letter-spacing:-0.161px;">Show Staged Files</span>
<div class="a" style="left:150px;top:394.9px;width:500px;height:0.7px;background:#a3a3a3"></div>
<div class="a" style="left:150px;top:395.6px;width:500px;height:0.6px;background:#f6f6f6"></div>
<div class="btn" style="left:579.6px;top:452.2px;width:59.2px;height:9.2px;opacity:.8;"></div>
<span class="t" style="left:586.86px;top:452.00px;font-size:6.3px;line-height:12px;height:12px;color:#9a9a9a;letter-spacing:-0.080px;">Reveal in Finder</span>
<div class="a" style="left:162.9px;top:416.6px;width:50.1px;height:33.7px;background:#fdfdfd;box-shadow:0 1.2px 2.4px rgba(0,0,0,.5),0 0 0.8px rgba(0,0,0,.35)"></div>
<svg class="a" style="left:165.7px;top:418.9px" width="44.4" height="29" viewBox="0 0 44.4 29">
<defs><filter id="bl" x="-10%" y="-10%" width="120%" height="120%"><feGaussianBlur stdDeviation="0.75"/></filter><clipPath id="pc"><rect x="0.5" y="0.5" width="43.4" height="28"/></clipPath></defs>
<rect width="44.4" height="29" fill="#0b0d08"/>
<g clip-path="url(#pc)"><g filter="url(#bl)">
<rect x="0" y="0" width="44.4" height="29" fill="#24381a"/>
<rect x="0" y="0" width="44.4" height="6.5" fill="#3f5b30"/>
<ellipse cx="20" cy="3" rx="8" ry="2.6" fill="#7c9a62"/><ellipse cx="31" cy="4.5" rx="5" ry="2.4" fill="#5f8048"/><ellipse cx="9" cy="3" rx="4" ry="2" fill="#4e6e3a"/>
<ellipse cx="40" cy="7" rx="3.4" ry="4.6" fill="#cfd2c4"/><ellipse cx="36.5" cy="10" rx="2" ry="2.4" fill="#a9b09c"/>
<ellipse cx="39.5" cy="19" rx="5" ry="8" fill="#2b312c"/>
<ellipse cx="8" cy="10" rx="6" ry="4" fill="#31502a"/><ellipse cx="30" cy="23" rx="7" ry="4" fill="#2d4a22"/><ellipse cx="6" cy="25" rx="6" ry="3.4" fill="#1a2a12"/>
<ellipse cx="19" cy="8" rx="2.7" ry="2.3" fill="#cf1f2a"/><ellipse cx="14" cy="12" rx="2.8" ry="2.4" fill="#c91c2c"/><ellipse cx="23" cy="11.2" rx="2.1" ry="1.9" fill="#d4242e"/>
<ellipse cx="14.2" cy="17.4" rx="2.3" ry="2.1" fill="#c41d36"/><ellipse cx="20" cy="15.8" rx="2.1" ry="1.9" fill="#c9212f"/><ellipse cx="26.4" cy="14" rx="1.7" ry="1.6" fill="#a8203a"/>
<ellipse cx="31" cy="12.6" rx="1.4" ry="1.3" fill="#9c2235"/><ellipse cx="4.2" cy="4" rx="1.7" ry="1.5" fill="#9c2a2a"/><ellipse cx="30" cy="18.6" rx="1.4" ry="1.2" fill="#c04070"/><ellipse cx="8" cy="18.6" rx="1.3" ry="1.2" fill="#b04a6a"/>
<ellipse cx="17" cy="10" rx="1" ry="0.9" fill="#e86a3a"/>
<ellipse cx="22" cy="20.4" rx="2.1" ry="1.7" fill="#b9b545"/><ellipse cx="27.4" cy="19.2" rx="1.5" ry="1.3" fill="#c2b840"/><ellipse cx="8.6" cy="22.4" rx="1.7" ry="1.4" fill="#9fa33a"/><ellipse cx="11" cy="26.2" rx="1.3" ry="1" fill="#bdaf3f"/><ellipse cx="17" cy="23" rx="1.4" ry="1.1" fill="#7f9a3a"/>
</g>
<filter id="nz" x="0" y="0" width="100%" height="100%"><feTurbulence type="fractalNoise" baseFrequency="0.55" numOctaves="2" seed="7" result="n"/><feColorMatrix type="matrix" values="0 0 0 0 0  0 0 0 0 0  0 0 0 0 0  1.6 1.6 0 0 -1.15"/></filter>
<rect x="0.5" y="0.5" width="43.4" height="28" filter="url(#nz)" opacity=".55"/>
<filter id="nz2" x="0" y="0" width="100%" height="100%"><feTurbulence type="fractalNoise" baseFrequency="0.6" numOctaves="2" seed="23" result="n"/><feColorMatrix type="matrix" values="0 0 0 0 0.75  0 0 0 0 0.85  0 0 0 0 0.5  1.6 0 1.6 0 -1.25"/></filter>
<rect x="0.5" y="0.5" width="43.4" height="28" filter="url(#nz2)" opacity=".35"/>
</g></svg>
<span class="t" style="left:240.31px;top:411.00px;font-size:6.3px;line-height:12px;height:12px;color:#1a1a1a;letter-spacing:-0.291px;font-weight:700;">Name:</span>
<span class="t" style="left:243.50px;top:423.00px;font-size:6.3px;line-height:12px;height:12px;color:#1a1a1a;letter-spacing:-0.299px;font-weight:700;">Kind:</span>
<span class="t" style="left:244.58px;top:436.00px;font-size:6.3px;line-height:12px;height:12px;color:#1a1a1a;letter-spacing:-0.221px;font-weight:700;">Size:</span>
<span class="t" style="left:232.81px;top:448.00px;font-size:6.3px;line-height:12px;height:12px;color:#1a1a1a;letter-spacing:0.005px;font-weight:700;">Created:</span>
<span class="t" style="left:261.70px;top:411.00px;font-size:6.3px;line-height:12px;height:12px;color:#1a1a1a;letter-spacing:-0.139px;">DSC_1754.NEF</span>
<span class="t" style="left:261.70px;top:423.00px;font-size:6.3px;line-height:12px;height:12px;color:#1a1a1a;letter-spacing:0.171px;">Nikon Electronic Format file</span>
<span class="t" style="left:261.70px;top:436.00px;font-size:6.3px;line-height:12px;height:12px;color:#1a1a1a;letter-spacing:0.281px;">5.91 MB × 2 = 11.82 MB</span>
<span class="t" style="left:261.70px;top:448.00px;font-size:6.3px;line-height:12px;height:12px;color:#1a1a1a;letter-spacing:0.159px;">(Multiple files)</span>
<div class="a" style="left:187.6px;top:122.4px;width:150px;height:115.4px;background:rgba(255,255,255,.98);border-radius:0 0 3.5px 3.5px;box-shadow:0 4px 9px rgba(0,0,0,.42),0 0 1px rgba(0,0,0,.45)"></div>
<svg class="a" style="left:199.2px;top:126.2px" width="13" height="10.6" viewBox="0 0 13 10.6"><rect x="0.6" y="0.6" width="11.8" height="9.4" rx="1.3" fill="none" stroke="#868686" stroke-width="1.05"/><path d="M1.8 8.2 L4.4 4.8 L6 6.4 L7.6 5.2 L11 8.4" fill="none" stroke="#868686" stroke-width="1.05"/><circle cx="9.6" cy="2.9" r="1" fill="#868686"/></svg>
<svg class="a" style="left:199.2px;top:137.8px" width="13" height="11" viewBox="0 0 13 11"><path d="M1.8 2.4 L3.8 2.4 L4.6 0.9 L8.4 0.9 L9.2 2.4 L11.2 2.4 Q12.3 2.4 12.3 3.5 L12.3 9 Q12.3 10.1 11.2 10.1 L1.8 10.1 Q0.7 10.1 0.7 9 L0.7 3.5 Q0.7 2.4 1.8 2.4 Z" fill="none" stroke="#868686" stroke-width="1.05"/><circle cx="6.5" cy="6.1" r="2.2" fill="#9a9a9a" stroke="#8a8a8a" stroke-width="0.8"/><circle cx="6.5" cy="6.1" r="0.8" fill="#e9e9e9"/></svg>
<svg class="a" style="left:199.2px;top:150.4px" width="13" height="11" viewBox="0 0 13 11"><path d="M0.7 1.9 Q0.7 0.9 1.7 0.9 L4.6 0.9 L5.6 2.3 L11.3 2.3 Q12.3 2.3 12.3 3.3 L12.3 9.2 Q12.3 10.2 11.3 10.2 L1.7 10.2 Q0.7 10.2 0.7 9.2 Z M0.7 4.0 L12.3 4.0" fill="none" stroke="#1a1a1a" stroke-width="0.95"/></svg>
<span class="t" style="left:214.40px;top:125.00px;font-size:7.7px;line-height:12px;height:12px;color:#a4a4a4;letter-spacing:0.007px;">iPhoto Library (already added)</span>
<span class="t" style="left:214.40px;top:138.00px;font-size:7.7px;line-height:12px;height:12px;color:#a4a4a4;letter-spacing:0.041px;">Aperture Library (already added)</span>
<span class="t" style="left:214.40px;top:150.00px;font-size:7.7px;line-height:12px;height:12px;color:#000;letter-spacing:-0.002px;-webkit-text-stroke:0.26px #000;">Folder...</span>
<div class="a" style="left:187.6px;top:165.5px;width:150px;height:0.7px;background:#dedede"></div>
<span class="t" style="left:200.00px;top:168.00px;font-size:7.7px;line-height:12px;height:12px;color:#000;letter-spacing:0.236px;-webkit-text-stroke:0.26px #000;">/Users/glebd/Dropbox</span>
<span class="t" style="left:200.00px;top:178.00px;font-size:7.7px;line-height:12px;height:12px;color:#000;letter-spacing:0.139px;-webkit-text-stroke:0.26px #000;">/Users/glebd/Usenet</span>
<span class="t" style="left:200.00px;top:188.00px;font-size:7.7px;line-height:12px;height:12px;color:#000;letter-spacing:0.170px;-webkit-text-stroke:0.26px #000;">/Users/glebd/Documents/Books</span>
<span class="t" style="left:200.00px;top:198.00px;font-size:7.7px;line-height:12px;height:12px;color:#a4a4a4;letter-spacing:0.144px;">/Users/glebd/Pictures</span>
<span class="t" style="left:200.00px;top:208.00px;font-size:7.7px;line-height:12px;height:12px;color:#000;letter-spacing:0.179px;-webkit-text-stroke:0.26px #000;">/Users/glebd/Downloads</span>
<div class="a" style="left:187.6px;top:221.8px;width:150px;height:0.7px;background:#dedede"></div>
<span class="t" style="left:200.00px;top:224.00px;font-size:7.7px;line-height:12px;height:12px;color:#000;letter-spacing:-0.093px;-webkit-text-stroke:0.26px #000;">Clear Recent Locations</span>
<svg class="a" style="left:132.70px;top:52.40px" width="16" height="8" viewBox="0 0 16 8"><path d="M0 0.6 Q3.8 2.7 15.4 4.0 Q3.8 5.3 0 7.4 Z" fill="#fbc03a" stroke="#2c2208" stroke-width="0.6" stroke-linejoin="round"/></svg>
<div class="co" style="left:35.10px;top:42.10px;width:99.10px;height:29.50px"></div>
<div class="a" style="left:132.00px;top:54.10px;width:2.2px;height:4.5px;background:#fabd38"></div>
<span class="t" style="left:43.90px;top:47.00px;font-size:7.5px;line-height:12px;height:12px;color:#1a1100;letter-spacing:0.050px;-webkit-text-stroke:0.3px #1a1100;">Multiple scan locations</span>
<span class="t" style="left:43.90px;top:56.00px;font-size:7.5px;line-height:12px;height:12px;color:#1a1100;letter-spacing:-0.034px;-webkit-text-stroke:0.3px #1a1100;">are saved between runs</span>
<svg class="a" style="left:132.70px;top:87.90px" width="16" height="8" viewBox="0 0 16 8"><path d="M0 0.6 Q3.8 2.7 15.4 4.0 Q3.8 5.3 0 7.4 Z" fill="#fbc03a" stroke="#2c2208" stroke-width="0.6" stroke-linejoin="round"/></svg>
<div class="co" style="left:35.10px;top:77.70px;width:99.10px;height:29.30px"></div>
<div class="a" style="left:132.00px;top:89.60px;width:2.2px;height:4.5px;background:#fabd38"></div>
<span class="t" style="left:43.90px;top:82.00px;font-size:7.5px;line-height:12px;height:12px;color:#1a1100;-webkit-text-stroke:0.3px #1a1100;">Scan location ranking</span>
<span class="t" style="left:43.90px;top:91.00px;font-size:7.5px;line-height:12px;height:12px;color:#1a1100;-webkit-text-stroke:0.3px #1a1100;">helps autoselection</span>
<svg class="a" style="left:132.70px;top:124.10px" width="16" height="8" viewBox="0 0 16 8"><path d="M0 0.6 Q3.8 2.7 15.4 4.0 Q3.8 5.3 0 7.4 Z" fill="#fbc03a" stroke="#2c2208" stroke-width="0.6" stroke-linejoin="round"/></svg>
<div class="co" style="left:35.10px;top:113.60px;width:99.10px;height:29.60px"></div>
<div class="a" style="left:132.00px;top:125.80px;width:2.2px;height:4.5px;background:#fabd38"></div>
<span class="t" style="left:43.90px;top:118.00px;font-size:7.5px;line-height:12px;height:12px;color:#1a1100;-webkit-text-stroke:0.3px #1a1100;">iPhoto and Aperture</span>
<span class="t" style="left:43.90px;top:127.00px;font-size:7.5px;line-height:12px;height:12px;color:#1a1100;-webkit-text-stroke:0.3px #1a1100;">library autodetection</span>
<svg class="a" style="left:132.70px;top:184.90px" width="16" height="8" viewBox="0 0 16 8"><path d="M0 0.6 Q3.8 2.7 15.4 4.0 Q3.8 5.3 0 7.4 Z" fill="#fbc03a" stroke="#2c2208" stroke-width="0.6" stroke-linejoin="round"/></svg>
<div class="co" style="left:35.10px;top:174.50px;width:99.10px;height:29.40px"></div>
<div class="a" style="left:132.00px;top:186.60px;width:2.2px;height:4.5px;background:#fabd38"></div>
<span class="t" style="left:43.90px;top:179.00px;font-size:7.5px;line-height:12px;height:12px;color:#1a1100;-webkit-text-stroke:0.3px #1a1100;">List of recently added</span>
<span class="t" style="left:43.90px;top:188.00px;font-size:7.5px;line-height:12px;height:12px;color:#1a1100;-webkit-text-stroke:0.3px #1a1100;">locations</span>
<svg class="a" style="left:132.70px;top:264.10px" width="16" height="8" viewBox="0 0 16 8"><path d="M0 0.6 Q3.8 2.7 15.4 4.0 Q3.8 5.3 0 7.4 Z" fill="#fbc03a" stroke="#2c2208" stroke-width="0.6" stroke-linejoin="round"/></svg>
<div class="co" style="left:35.10px;top:253.60px;width:99.10px;height:29.60px"></div>
<div class="a" style="left:132.00px;top:265.80px;width:2.2px;height:4.5px;background:#fabd38"></div>
<span class="t" style="left:43.90px;top:258.00px;font-size:7.5px;line-height:12px;height:12px;color:#1a1100;-webkit-text-stroke:0.3px #1a1100;">Duplicates are grouped</span>
<span class="t" style="left:43.90px;top:267.00px;font-size:7.5px;line-height:12px;height:12px;color:#1a1100;-webkit-text-stroke:0.3px #1a1100;">together</span>
<svg class="a" style="left:132.70px;top:317.10px" width="16" height="8" viewBox="0 0 16 8"><path d="M0 0.6 Q3.8 2.7 15.4 4.0 Q3.8 5.3 0 7.4 Z" fill="#fbc03a" stroke="#2c2208" stroke-width="0.6" stroke-linejoin="round"/></svg>
<div class="co" style="left:35.10px;top:306.70px;width:99.10px;height:29.60px"></div>
<div class="a" style="left:132.00px;top:318.80px;width:2.2px;height:4.5px;background:#fabd38"></div>
<span class="t" style="left:43.90px;top:311.00px;font-size:7.5px;line-height:12px;height:12px;color:#1a1100;-webkit-text-stroke:0.3px #1a1100;">Preferred file in each</span>
<span class="t" style="left:43.90px;top:320.00px;font-size:7.5px;line-height:12px;height:12px;color:#1a1100;-webkit-text-stroke:0.3px #1a1100;">group is highlighted</span>
<svg class="a" style="left:132.70px;top:367.50px" width="16" height="8" viewBox="0 0 16 8"><path d="M0 0.6 Q3.8 2.7 15.4 4.0 Q3.8 5.3 0 7.4 Z" fill="#fbc03a" stroke="#2c2208" stroke-width="0.6" stroke-linejoin="round"/></svg>
<div class="co" style="left:35.10px;top:357.30px;width:99.10px;height:29.50px"></div>
<div class="a" style="left:132.00px;top:369.20px;width:2.2px;height:4.5px;background:#fabd38"></div>
<span class="t" style="left:43.90px;top:362.00px;font-size:7.5px;line-height:12px;height:12px;color:#1a1100;-webkit-text-stroke:0.3px #1a1100;">Smart autoselection</span>
<span class="t" style="left:43.90px;top:371.00px;font-size:7.5px;line-height:12px;height:12px;color:#1a1100;-webkit-text-stroke:0.3px #1a1100;">of redundant file copies</span>
<svg class="a" style="left:132.70px;top:428.50px" width="16" height="8" viewBox="0 0 16 8"><path d="M0 0.6 Q3.8 2.7 15.4 4.0 Q3.8 5.3 0 7.4 Z" fill="#fbc03a" stroke="#2c2208" stroke-width="0.6" stroke-linejoin="round"/></svg>
<div class="co" style="left:35.10px;top:418.60px;width:99.10px;height:29.50px"></div>
<div class="a" style="left:132.00px;top:430.20px;width:2.2px;height:4.5px;background:#fabd38"></div>
<span class="t" style="left:43.90px;top:423.00px;font-size:7.5px;line-height:12px;height:12px;color:#1a1100;-webkit-text-stroke:0.3px #1a1100;">Selected file preview</span>
<span class="t" style="left:43.90px;top:432.00px;font-size:7.5px;line-height:12px;height:12px;color:#1a1100;-webkit-text-stroke:0.3px #1a1100;">and information</span>
<svg class="a" style="left:650.30px;top:61.30px" width="16" height="8" viewBox="0 0 16 8"><path d="M16 0.6 Q12.2 2.7 0.6 4.0 Q12.2 5.3 16 7.4 Z" fill="#fbc03a" stroke="#2c2208" stroke-width="0.6" stroke-linejoin="round"/></svg>
<div class="co" style="left:664.80px;top:50.30px;width:98.50px;height:29.50px"></div>
<div class="a" style="left:664.80px;top:63.00px;width:2.2px;height:4.5px;background:#fabd38"></div>
<span class="t" style="left:673.60px;top:55.00px;font-size:7.5px;line-height:12px;height:12px;color:#1a1100;-webkit-text-stroke:0.3px #1a1100;">Find duplicates across</span>
<span class="t" style="left:673.60px;top:64.00px;font-size:7.5px;line-height:12px;height:12px;color:#1a1100;-webkit-text-stroke:0.3px #1a1100;">all locations at once</span>
<svg class="a" style="left:650.30px;top:112.30px" width="16" height="8" viewBox="0 0 16 8"><path d="M16 0.6 Q12.2 2.7 0.6 4.0 Q12.2 5.3 16 7.4 Z" fill="#fbc03a" stroke="#2c2208" stroke-width="0.6" stroke-linejoin="round"/></svg>
<div class="co" style="left:664.80px;top:101.60px;width:98.50px;height:29.40px"></div>
<div class="a" style="left:664.80px;top:114.00px;width:2.2px;height:4.5px;background:#fabd38"></div>
<span class="t" style="left:673.60px;top:106.00px;font-size:7.5px;line-height:12px;height:12px;color:#1a1100;-webkit-text-stroke:0.3px #1a1100;">Wasted disk space</span>
<span class="t" style="left:673.60px;top:115.00px;font-size:7.5px;line-height:12px;height:12px;color:#1a1100;-webkit-text-stroke:0.3px #1a1100;">summary</span>
<svg class="a" style="left:650.30px;top:190.90px" width="16" height="8" viewBox="0 0 16 8"><path d="M16 0.6 Q12.2 2.7 0.6 4.0 Q12.2 5.3 16 7.4 Z" fill="#fbc03a" stroke="#2c2208" stroke-width="0.6" stroke-linejoin="round"/></svg>
<div class="co" style="left:664.80px;top:179.70px;width:98.50px;height:29.50px"></div>
<div class="a" style="left:664.80px;top:192.60px;width:2.2px;height:4.5px;background:#fabd38"></div>
<span class="t" style="left:673.60px;top:184.00px;font-size:7.5px;line-height:12px;height:12px;color:#1a1100;-webkit-text-stroke:0.3px #1a1100;">Scan results are saved</span>
<span class="t" style="left:673.60px;top:193.00px;font-size:7.5px;line-height:12px;height:12px;color:#1a1100;-webkit-text-stroke:0.3px #1a1100;">between runs</span>
<svg class="a" style="left:650.30px;top:232.00px" width="16" height="8" viewBox="0 0 16 8"><path d="M16 0.6 Q12.2 2.7 0.6 4.0 Q12.2 5.3 16 7.4 Z" fill="#fbc03a" stroke="#2c2208" stroke-width="0.6" stroke-linejoin="round"/></svg>
<div class="co" style="left:664.80px;top:221.30px;width:98.50px;height:29.30px"></div>
<div class="a" style="left:664.80px;top:233.70px;width:2.2px;height:4.5px;background:#fabd38"></div>
<span class="t" style="left:673.60px;top:226.00px;font-size:7.5px;line-height:12px;height:12px;color:#1a1100;-webkit-text-stroke:0.3px #1a1100;">Accessible via keyboard</span>
<span class="t" style="left:673.60px;top:235.00px;font-size:7.5px;line-height:12px;height:12px;color:#1a1100;-webkit-text-stroke:0.3px #1a1100;">and VoiceOver</span>
<svg class="a" style="left:650.30px;top:375.50px" width="16" height="8" viewBox="0 0 16 8"><path d="M16 0.6 Q12.2 2.7 0.6 4.0 Q12.2 5.3 16 7.4 Z" fill="#fbc03a" stroke="#2c2208" stroke-width="0.6" stroke-linejoin="round"/></svg>
<div class="co" style="left:664.80px;top:355.80px;width:98.50px;height:46.80px"></div>
<div class="a" style="left:664.80px;top:377.20px;width:2.2px;height:4.5px;background:#fabd38"></div>
<span class="t" style="left:673.60px;top:360.00px;font-size:7.5px;line-height:12px;height:12px;color:#1a1100;-webkit-text-stroke:0.3px #1a1100;">Staging area for deleted</span>
<span class="t" style="left:673.60px;top:369.00px;font-size:7.5px;line-height:12px;height:12px;color:#1a1100;-webkit-text-stroke:0.3px #1a1100;">files allows to easily</span>
<span class="t" style="left:673.60px;top:378.00px;font-size:7.5px;line-height:12px;height:12px;color:#1a1100;-webkit-text-stroke:0.3px #1a1100;">restore or delete files</span>
<span class="t" style="left:673.60px;top:387.00px;font-size:7.5px;line-height:12px;height:12px;color:#1a1100;-webkit-text-stroke:0.3px #1a1100;">permanently</span>
<svg class="a" style="left:528.70px;top:378.00px" width="7.2" height="11" viewBox="0 0 7.2 11"><path d="M0.3 11 Q2.9 9 3.5 0.6 Q4.1 9 6.9 11 Z" fill="#fdd158" stroke="#2c2208" stroke-width="0.6" stroke-linejoin="round"/></svg>
<div class="co" style="left:489.10px;top:387.40px;width:85.50px;height:29.50px"></div>
<div class="a" style="left:530.00px;top:387.40px;width:4.9px;height:2.2px;background:#fdd35b"></div>
<span class="t" style="left:498.40px;top:392.00px;font-size:7.5px;line-height:12px;height:12px;color:#1a1100;-webkit-text-stroke:0.3px #1a1100;">Summary of files</span>
<span class="t" style="left:498.40px;top:401.00px;font-size:7.5px;line-height:12px;height:12px;color:#1a1100;-webkit-text-stroke:0.3px #1a1100;">selected for removal</span>
</div>
</body>
</html>
